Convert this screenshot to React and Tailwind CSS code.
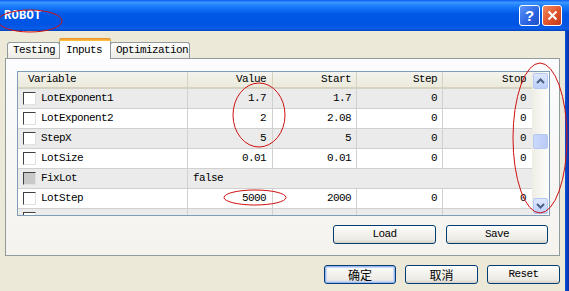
import React from "react";

const mono = "font-['Liberation_Mono',monospace] text-[11px] tracking-[-0.6px]";

const rows = [
  { name: "LotExponent1", value: "1.7", start: "1.7", step: "0", stop: "0" },
  { name: "LotExponent2", value: "2", start: "2.08", step: "0", stop: "0" },
  { name: "StepX", value: "5", start: "5", step: "0", stop: "0" },
  { name: "LotSize", value: "0.01", start: "0.01", step: "0", stop: "0" },
  { name: "FixLot", value: "false", bool: true },
  { name: "LotStep", value: "5000", start: "2000", step: "0", stop: "0" },
  { name: "", value: "", start: "", step: "", stop: "" },
];

function Checkbox({ disabled }) {
  return (
    <span
      className={`inline-block w-[13px] h-[13px] shrink-0 border border-t-[#404040] border-l-[#404040] border-r-[#e0e0e0] border-b-[#e0e0e0] ${
        disabled ? "bg-[#c8c8c8]" : "bg-white"
      }`}
    />
  );
}

function XpButton({ children, primary, className = "" }) {
  return (
    <button
      className={`h-[19px] rounded-[3px] border border-[#003c74] bg-[linear-gradient(180deg,#ffffff_0%,#f4f3ee_40%,#ecebe6_80%,#d6d0c5_100%)] flex items-center justify-center ${
        primary ? "shadow-[inset_0_0_0_1px_#9cb8f0,inset_0_0_0_2px_#c6d7fa]" : ""
      } ${className}`}
    >
      {children}
    </button>
  );
}

function Tab({ label, active, className = "" }) {
  if (active) {
    return (
      <div
        className={`relative z-10 h-[21px] -mb-px px-[6px] bg-white border border-[#919b9c] border-b-0 rounded-t-[3px] flex items-start pt-[3px] ${className}`}
      >
        <span className="absolute left-[-1px] right-[-1px] top-[-1px] h-[3px] rounded-t-[3px] bg-[linear-gradient(180deg,#e68b2c,#ffc73c)]" />
        <span className={`${mono} text-black`}>{label}</span>
      </div>
    );
  }
  return (
    <div
      className={`h-[16px] px-[5px] border border-[#919b9c] border-b-0 rounded-t-[3px] bg-[linear-gradient(180deg,#ffffff,#ecebe5)] flex items-center ${className}`}
    >
      <span className={`${mono} text-black`}>{label}</span>
    </div>
  );
}

function Chevron({ down }) {
  return (
    <svg width="9" height="6" viewBox="0 0 9 6">
      <path
        d={down ? "M1 1 L4.5 4.5 L8 1" : "M1 5 L4.5 1.5 L8 5"}
        fill="none"
        stroke="#4d6185"
        strokeWidth="2"
      />
    </svg>
  );
}

export default function App() {
  return (
    <div className="relative w-[569px] h-[291px] overflow-hidden bg-[#ece9d8] flex flex-col">
      {/* title bar */}
      <div className="h-[31px] shrink-0 flex items-center pl-[4px] pr-[7px] bg-[linear-gradient(180deg,#0a5ef0_0%,#3d95ff_8%,#1a7cfb_20%,#0058e6_45%,#0054e3_80%,#0a5de8_92%,#0043c0_100%)]">
        <span className="font-['Liberation_Mono',monospace] font-bold text-[12px] text-white tracking-[0.3px]">
          ROBOT
        </span>
        <div className="ml-auto flex items-center gap-[2px]">
          <div className="w-[21px] h-[21px] rounded-[3px] border border-white bg-[linear-gradient(135deg,#5c95f8,#2a63e0_60%,#1d4fc8)] flex items-center justify-center">
            <span className="font-['Liberation_Sans',sans-serif] font-bold text-[15px] leading-none text-white">
              ?
            </span>
          </div>
          <div className="w-[20px] h-[21px] rounded-[3px] border border-white bg-[linear-gradient(135deg,#f08a62,#e0532a_55%,#c2391a)] flex items-center justify-center">
            <svg width="11" height="11" viewBox="0 0 11 11">
              <path d="M1.5 1.5 L9.5 9.5 M9.5 1.5 L1.5 9.5" stroke="white" strokeWidth="2" />
            </svg>
          </div>
        </div>
      </div>

      <div className="flex-1 flex">
        <div className="w-[565px] flex flex-col px-[5px] pt-[6px]">
          {/* tabs */}
          <div className="h-[21px] flex items-end pl-[2px]">
            <Tab label="Testing" className="w-[53px]" />
            <Tab label="Inputs" active className="w-[52px] -mx-px" />
            <Tab label="Optimization" className="w-[80px]" />
          </div>

          {/* tab panel */}
          <div className="h-[198px] w-[555px] border border-[#919b9c] bg-[linear-gradient(180deg,#fcfcfe,#f4f3ee)] flex flex-col pt-[12px] pl-[11px] pr-[9px]">
            <div className="h-[145px] border border-[#7f9db9] bg-white flex overflow-hidden">
              <div className="flex-1 flex flex-col">
                {/* header */}
                <div className={`h-[17px] shrink-0 flex bg-[linear-gradient(180deg,#f4f3ee,#ebeadb)] border-b-2 border-[#d6d2c2] ${mono} text-black`}>
                  <div className="w-[170px] border-r border-[#d6d2c2] pl-[10px] flex items-center">Variable</div>
                  <div className="w-[85px] border-r border-[#d6d2c2] pr-[6px] flex items-center justify-end">Value</div>
                  <div className="w-[84px] border-r border-[#d6d2c2] pr-[5px] flex items-center justify-end">Start</div>
                  <div className="w-[86px] border-r border-[#d6d2c2] pr-[5px] flex items-center justify-end">Step</div>
                  <div className="flex-1 pr-[6px] flex items-center justify-end">Stop</div>
                </div>
                {rows.map((r, i) => (
                  <div
                    key={i}
                    className={`h-[20px] shrink-0 flex border-b border-[#d0d0d0] ${mono} text-black ${
                      i % 2 === 0 ? "bg-[#ebebeb]" : "bg-white"
                    }`}
                  >
                    <div className="w-[170px] border-r border-[#d0d0d0] pl-[5px] flex items-center gap-[5px]">
                      <Checkbox disabled={r.bool} />
                      <span>{r.name}</span>
                    </div>
                    {r.bool ? (
                      <div className="flex-1 pl-[5px] flex items-center">{r.value}</div>
                    ) : (
                      <>
                        <div className="w-[85px] border-r border-[#d0d0d0] pr-[6px] flex items-center justify-end">{r.value}</div>
                        <div className="w-[84px] border-r border-[#d0d0d0] pr-[5px] flex items-center justify-end">{r.start}</div>
                        <div className="w-[86px] border-r border-[#d0d0d0] pr-[5px] flex items-center justify-end">{r.step}</div>
                        <div className="flex-1 pr-[6px] flex items-center justify-end">{r.stop}</div>
                      </>
                    )}
                  </div>
                ))}
              </div>
              {/* scrollbar */}
              <div className="w-[17px] shrink-0 flex flex-col items-center py-px bg-[linear-gradient(90deg,#eeede5,#fefefb)]">
                <div className="w-[15px] h-[16px] rounded-[2px] border border-[#b5c8f1] bg-[linear-gradient(180deg,#dfe8fe,#bccffa)] flex items-center justify-center">
                  <Chevron />
                </div>
                <div className="mt-[45px] w-[15px] h-[15px] rounded-[2px] border border-[#b5c8f1] bg-[linear-gradient(90deg,#c9d8fc,#b9cbf5)]" />
                <div className="mt-auto w-[15px] h-[16px] rounded-[2px] border border-[#b5c8f1] bg-[linear-gradient(180deg,#dfe8fe,#bccffa)] flex items-center justify-center">
                  <Chevron down />
                </div>
              </div>
            </div>

            <div className="flex justify-end gap-[10px] mt-[9px] pr-[2px]">
              <XpButton className="w-[103px]">
                <span className={`${mono} text-black`}>Load</span>
              </XpButton>
              <XpButton className="w-[102px]">
                <span className={`${mono} text-black`}>Save</span>
              </XpButton>
            </div>
          </div>

          {/* dialog buttons */}
          <div className="flex justify-end gap-[9px] mt-[9px] w-[555px]">
            <XpButton primary className="w-[72px]">
              <span className="font-['Noto_Sans_CJK_SC',sans-serif] text-[12px] leading-none text-black">确定</span>
            </XpButton>
            <XpButton className="w-[73px]">
              <span className="font-['Noto_Sans_CJK_SC',sans-serif] text-[12px] leading-none text-black">取消</span>
            </XpButton>
            <XpButton className="w-[73px]">
              <span className={`${mono} text-black`}>Reset</span>
            </XpButton>
          </div>
        </div>
        {/* right window frame */}
        <div className="w-[4px] bg-[linear-gradient(90deg,#0a4fd8,#0831a5)]" />
      </div>

      {/* red annotation ellipses */}
      <svg className="absolute inset-0 pointer-events-none" width="569" height="291">
        <g fill="none" stroke="#d01010" strokeWidth="1">
          <ellipse cx="30" cy="21" rx="32" ry="11" />
          <ellipse cx="259" cy="115" rx="26" ry="32" />
          <ellipse cx="255" cy="197.5" rx="31" ry="7.5" />
          <ellipse cx="540" cy="138" rx="27" ry="75" />
        </g>
      </svg>
    </div>
  );
}
